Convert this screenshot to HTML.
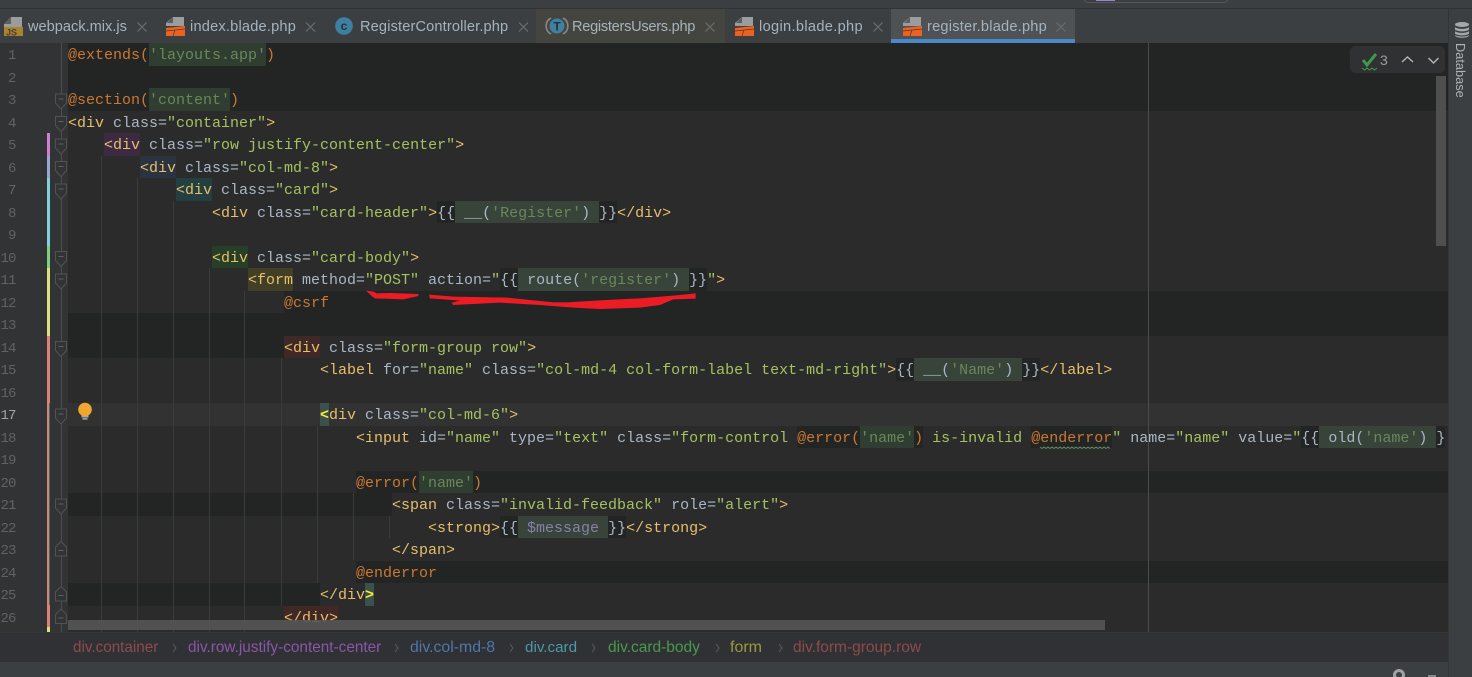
<!DOCTYPE html>
<html><head><meta charset="utf-8"><style>
html,body{margin:0;padding:0;background:#3c3f41}
#r{position:relative;width:1472px;height:677px;overflow:hidden;background:#3c3f41;font-family:"Liberation Sans",sans-serif}
.x{position:absolute}
.l{position:absolute;white-space:pre;font:15px/26.5px "Liberation Mono",monospace;color:#a9b7c6;height:22.5px}
.l span{display:inline-block;height:22.5px;vertical-align:top}
.n{position:absolute;left:0;width:15.5px;text-align:right;font:14px/26.5px "Liberation Mono",monospace;letter-spacing:-.9px;color:#606366;white-space:nowrap;height:22.5px}
.t{color:#e8bf6a}.s{color:#a5c261}.d{color:#cc7832}.q{color:#6a8759}
.p{background:#2f3e30}.g{background:#38443a}.k{background:#232525}
.g i{font-style:normal;color:#6a8759}
.m{background:#3b514d;color:#ffef28;font-weight:bold}
.tab{position:absolute;top:10px;height:34px;font-size:14.6px;line-height:34px;color:#a5b3be;white-space:nowrap}
.c{position:absolute;top:633px;line-height:30px;white-space:nowrap}
.gd{position:absolute;width:1px;background:#3a3b3b}
</style></head><body><div id="r">

<div class="x" style="left:0;top:8px;width:1472px;height:1px;background:#303234"></div>
<div class="x" style="left:1084px;top:-6px;width:144px;height:9px;border:1px solid #55585a;border-radius:4px;box-sizing:border-box"></div>
<div class="x" style="left:1096px;top:0;width:19px;height:1px;background:#9b7fd0"></div>

<div class="x" style="left:536px;top:9px;width:189px;height:34px;background:#45453f"></div>
<div class="x" style="left:891px;top:9px;width:184px;height:34px;background:#4e5254"></div>
<div class="x" style="left:891px;top:39px;width:184px;height:4px;background:#4a88c7"></div>

<div class="tab" style="left:28px">webpack.mix.js</div>
<div class="tab" style="left:190px;letter-spacing:.2px">index.blade.php</div>
<div class="tab" style="left:360px;letter-spacing:.14px">RegisterController.php</div>
<div class="tab" style="left:572px;letter-spacing:-.28px">RegistersUsers.php</div>
<div class="tab" style="left:759px;letter-spacing:.33px">login.blade.php</div>
<div class="tab" style="left:927px;letter-spacing:.22px">register.blade.php</div>

<svg class="x" style="left:0;top:0" width="1472" height="44">
<g stroke="#6c6f71" stroke-width="1.2" fill="none">
<path d="M137.500 22.500l9 9m0-9l-9 9M306 22.500l9 9m0-9l-9 9M519 22.500l9 9m0-9l-9 9M705.500 22.500l9 9m0-9l-9 9M873.500 22.500l9 9m0-9l-9 9M1056.500 22.500l9 9m0-9l-9 9"/>
</g>
<path d="M11 17h11v10H4v-3z" fill="#9a9c9e"/><path d="M11 17v7H4z" fill="#5c5f61"/>
<rect x="4" y="27" width="19" height="9" fill="#a88430"/>
<text x="6" y="35.500" font-family="Liberation Sans" font-size="9" font-weight="bold" fill="#4a4030">JS</text>
<g id="b1"><path d="M173 17h11v9h-18v-3z" fill="#9a9c9e"/><path d="M173 17v6h-6z" fill="#5c5f61"/><path d="M166 28l19-2v10h-19z" fill="#ee6220"/><path d="M166 31l19-2M175 30l-2 6" stroke="#4a3a30" stroke-width=".7" fill="none"/></g>
<use href="#b1" x="569"/><use href="#b1" x="737"/>
<circle cx="344" cy="26" r="8.800" fill="#3f7f9f"/>
<text x="344" y="30" text-anchor="middle" font-family="Liberation Sans" font-size="12" font-weight="bold" fill="#25323a">c</text>
<circle cx="557" cy="26" r="7.500" fill="#3f7f9f"/>
<path d="M551 18a9 9 0 0 0 0 16M563 18a9 9 0 0 1 0 16" stroke="#85888a" stroke-width="1.600" fill="none"/>
<text x="557" y="30.500" text-anchor="middle" font-family="Liberation Sans" font-size="12" font-weight="bold" fill="#25323a">T</text>
</svg>

<div class="x" style="left:0;top:43px;width:68px;height:589px;background:#313335"></div>
<div class="x" style="left:68px;top:43px;width:1380px;height:589px;background:#2b2b2b"></div>

<div class="x" style="left:68px;top:43px;width:1380px;height:67.500px;background:#232525"></div>
<div class="x" style="left:284px;top:290.500px;width:1164px;height:22.500px;background:#232525"></div>
<div class="x" style="left:68px;top:313px;width:1380px;height:22.500px;background:#232525"></div>
<div class="x" style="left:68px;top:335.500px;width:216px;height:22.500px;background:#232525"></div>
<div class="x" style="left:68px;top:403px;width:1380px;height:22.500px;background:#323232"></div>
<div class="x" style="left:356px;top:470.500px;width:1092px;height:22.500px;background:#232525"></div>
<div class="x" style="left:68px;top:493px;width:324px;height:22.500px;background:#232525"></div>
<div class="x" style="left:356px;top:560.500px;width:1092px;height:22.500px;background:#232525"></div>
<div class="x" style="left:68px;top:583px;width:252px;height:22.500px;background:#232525"></div>

<div class="gd" style="left:101px;top:155.500px;height:477px"></div>
<div class="gd" style="left:137px;top:178px;height:454px"></div>
<div class="gd" style="left:173px;top:200.500px;height:432px"></div>
<div class="gd" style="left:209px;top:268px;height:364px"></div>
<div class="gd" style="left:244px;top:290.500px;height:342px"></div>
<div class="gd" style="left:281px;top:358px;height:248px"></div>
<div class="gd" style="left:317px;top:425.500px;height:157px"></div>
<div class="gd" style="left:353px;top:493px;height:67px"></div>
<div class="gd" style="left:389px;top:515.500px;height:22px"></div>
<div class="x" style="left:1148px;top:43px;width:1px;height:589px;background:#4c4c4c"></div>

<div class="x" style="left:61px;top:43px;width:1px;height:589px;background:#4b4d4f"></div>
<div class="x" style="left:47px;top:133px;width:3px;height:23px;background:#cf7fd0"></div>
<div class="x" style="left:47px;top:156px;width:3px;height:22px;background:#9aa6cf"></div>
<div class="x" style="left:47px;top:178px;width:3px;height:68px;background:#7fd2dc"></div>
<div class="x" style="left:47px;top:246px;width:3px;height:22px;background:#7fcf7f"></div>
<div class="x" style="left:47px;top:268px;width:3px;height:68px;background:#dfdf80"></div>
<div class="x" style="left:47px;top:336px;width:3px;height:291px;background:#df8078"></div>
<div class="x" style="left:49px;top:403px;width:1px;height:202px;background:#3f6e6a"></div>
<div class="x" style="left:47px;top:627px;width:3px;height:5px;background:#dfdf80"></div>

<svg class="x" style="left:0;top:0" width="100" height="640">
<defs><g id="fd"><path d="M55.500 6H66.500V15L61 21L55.500 15Z" fill="#313335" stroke="#505254"/><path d="M58.500 11H63.500" stroke="#5f6265"/></g>
<g id="fu"><path d="M61 3.500L66.500 9V18H55.500V9Z" fill="#313335" stroke="#505254"/><path d="M58.500 12.500H63.500" stroke="#5f6265"/></g></defs>
<use href="#fd" y="88"/><use href="#fd" y="110.500"/><use href="#fd" y="133"/><use href="#fd" y="155.500"/><use href="#fd" y="178"/><use href="#fd" y="245.500"/><use href="#fd" y="268"/><use href="#fd" y="335.500"/><use href="#fd" y="403"/><use href="#fd" y="493"/>
<use href="#fu" y="538"/><use href="#fu" y="583"/><use href="#fu" y="605.500"/>
<circle cx="85" cy="409.500" r="6.800" fill="#f0a732"/><path d="M81.500 413h7v3h-7z" fill="#f0a732"/>
<path d="M81.500 416.700h7M82.500 418.900h5" stroke="#a9a9a9" stroke-width="1.500"/>
</svg>

<div class="n" style="top:43px">1</div><div class="n" style="top:65.500px">2</div><div class="n" style="top:88px">3</div><div class="n" style="top:110.500px">4</div><div class="n" style="top:133px">5</div><div class="n" style="top:155.500px">6</div><div class="n" style="top:178px">7</div><div class="n" style="top:200.500px">8</div><div class="n" style="top:223px">9</div><div class="n" style="top:245.500px">10</div><div class="n" style="top:268px">11</div><div class="n" style="top:290.500px">12</div><div class="n" style="top:313px">13</div><div class="n" style="top:335.500px">14</div><div class="n" style="top:358px">15</div><div class="n" style="top:380.500px">16</div><div class="n" style="top:403px;color:#a4a3a3">17</div><div class="n" style="top:425.500px">18</div><div class="n" style="top:448px">19</div><div class="n" style="top:470.500px">20</div><div class="n" style="top:493px">21</div><div class="n" style="top:515.500px">22</div><div class="n" style="top:538px">23</div><div class="n" style="top:560.500px">24</div><div class="n" style="top:583px">25</div><div class="n" style="top:605.500px">26</div>

<div class="l" style="left:68px;top:43px"><span class="d">@extends(</span><span class="q p">'layouts.app'</span><span class="d">)</span></div>
<div class="l" style="left:68px;top:88px"><span class="d">@section(</span><span class="q p">'content'</span><span class="d">)</span></div>
<div class="l" style="left:68px;top:110.500px"><span class="t">&lt;div</span> class=<span class="s">"container"</span><span class="t">&gt;</span></div>
<div class="l" style="left:104px;top:133px"><span class="t" style="background:#3c2a42">&lt;div</span> class=<span class="s">"row justify-content-center"</span><span class="t">&gt;</span></div>
<div class="l" style="left:140px;top:155.500px"><span class="t" style="background:#2c3340">&lt;div</span> class=<span class="s">"col-md-8"</span><span class="t">&gt;</span></div>
<div class="l" style="left:176px;top:178px"><span class="t" style="background:#233f3f">&lt;div</span> class=<span class="s">"card"</span><span class="t">&gt;</span></div>
<div class="l" style="left:212px;top:200.500px"><span class="t">&lt;div</span> class=<span class="s">"card-header"</span><span class="t">&gt;</span><span class="k">{{</span><span class="g"> __(<i>'Register'</i>) </span><span class="k">}}</span><span class="t">&lt;/div&gt;</span></div>
<div class="l" style="left:212px;top:245.500px"><span class="t" style="background:#263f26">&lt;div</span> class=<span class="s">"card-body"</span><span class="t">&gt;</span></div>
<div class="l" style="left:248px;top:268px"><span class="t" style="background:#414026">&lt;form</span> method=<span class="s">"POST"</span> action=<span class="s">"</span><span class="k">{{</span><span class="g"> route(<i>'register'</i>) </span><span class="k">}}</span><span class="s">"</span><span class="t">&gt;</span></div>
<div class="l d" style="left:284px;top:290.500px">@csrf</div>
<div class="l" style="left:284px;top:335.500px"><span class="t" style="background:#402826">&lt;div</span> class=<span class="s">"form-group row"</span><span class="t">&gt;</span></div>
<div class="l" style="left:320px;top:358px"><span class="t">&lt;label</span> for=<span class="s">"name"</span> class=<span class="s">"col-md-4 col-form-label text-md-right"</span><span class="t">&gt;</span><span class="k">{{</span><span class="g"> __(<i>'Name'</i>) </span><span class="k">}}</span><span class="t">&lt;/label&gt;</span></div>
<div class="l" style="left:320px;top:403px"><span class="m">&lt;</span><span class="t">div</span> class=<span class="s">"col-md-6"</span><span class="t">&gt;</span></div>
<div class="l" style="left:356px;top:425.500px;width:1092px;overflow:hidden"><span class="t">&lt;input</span> id=<span class="s">"name"</span> type=<span class="s">"text"</span> class=<span class="s">"form-control </span><span class="k d">@error(</span><span class="q p">'name'</span><span class="k d">)</span><span class="s"> is-invalid </span><span class="k d">@enderror</span><span class="s">"</span> name=<span class="s">"name"</span> value=<span class="s">"</span><span class="k">{{</span><span class="g"> old(<i>'name'</i>) </span><span class="k">}</span></div>
<div class="l" style="left:356px;top:470.500px"><span class="d">@error(</span><span class="q p">'name'</span><span class="d">)</span></div>
<div class="l" style="left:392px;top:493px"><span class="t">&lt;span</span> class=<span class="s">"invalid-feedback"</span> role=<span class="s">"alert"</span><span class="t">&gt;</span></div>
<div class="l" style="left:428px;top:515.500px"><span class="t">&lt;strong&gt;</span><span class="k">{{</span><span class="g"> <span style="color:#8a7fa8">$message</span> </span><span class="k">}}</span><span class="t">&lt;/strong&gt;</span></div>
<div class="l t" style="left:392px;top:538px">&lt;/span&gt;</div>
<div class="l d" style="left:356px;top:560.500px">@enderror</div>
<div class="l" style="left:320px;top:583px"><span class="t">&lt;/div</span><span class="m">&gt;</span></div>
<div class="l" style="left:284px;top:605.500px"><span class="t" style="background:#402826">&lt;/div&gt;</span></div>

<svg class="x" style="left:0;top:0" width="1472" height="677">
<path d="M1040 447l2 1.500 2-1.500 2 1.500 2-1.500 2 1.500 2-1.500 2 1.500 2-1.500 2 1.500 2-1.500 2 1.500 2-1.500 2 1.500 2-1.500 2 1.500 2-1.500 2 1.500 2-1.500 2 1.500 2-1.500 2 1.500 2-1.500 2 1.500 2-1.500 2 1.500 2-1.500 2 1.500 2-1.500 2 1.500 2-1.500 2 1.500 2-1.500 2 1.500 2-1.500 2 1.500" stroke="#5f8a5f" fill="none"/>
<g transform="translate(340 260) scale(.3333)" fill="#ed1c24">
<path d="M78 92L100 95L110 100L150 99L235 102V108L190 118L105 115L95 108Z"/>
<path d="M267 104L340 110L500 113L640 127L680 127L800 120L900 115L1000 107L1067 100V116L1000 118L960 135L900 143L780 147L700 143L600 135L480 128L340 135L335 128L360 122L270 115Z"/>
</g>
</svg>

<div class="x" style="left:68px;top:620px;width:1037px;height:10px;background:#555;opacity:.9"></div>
<div class="x" style="left:1436px;top:76px;width:10px;height:170px;background:#4e4f4f"></div>
<div class="x" style="left:1350px;top:46px;width:95px;height:27px;border-radius:5px;background:#2f3132"></div>
<div class="x" style="left:1380px;top:50px;font-size:14px;line-height:20px;color:#9a9da0">3</div>
<svg class="x" style="left:1350px;top:46px" width="95" height="27">
<path d="M13 14l4 5 9-11" stroke="#3f9a4a" stroke-width="3" fill="none"/>
<path d="M12 22l2.500 2 2.500-2 2.500 2 2.500-2 2.500 2 2.500-2" stroke="#3f9a4a" fill="none"/>
<path d="M52 16l5.500-5 5.500 5M78.500 12l5 5 5-5" stroke="#afb1b3" stroke-width="1.500" fill="none"/>
</svg>

<div class="x" style="left:1448px;top:9px;width:1px;height:668px;background:#323436"></div>
<svg class="x" style="left:1454px;top:21px" width="16" height="18">
<g fill="#a5a7a9"><ellipse cx="8" cy="3.500" rx="7" ry="2.500"/><path d="M1 6c2 2.500 12 2.500 14 0v2.500c-2 2.500-12 2.500-14 0zM1 10c2 2.500 12 2.500 14 0v2.500c-2 2.500-12 2.500-14 0z"/><path d="M1 14c2 2 12 2 14 0v.5c-1 3-13 3-14 0z"/></g>
</svg>
<div class="x" style="left:1452px;top:43px;writing-mode:vertical-rl;font-size:12.800px;line-height:16px;color:#afb1b3;white-space:nowrap">Database</div>

<div class="x" style="left:0;top:632px;width:1448px;height:30px;background:#2f3134;border-top:1px solid #36383a;box-sizing:border-box"></div>
<div class="c" style="left:73px;color:#8f4b4b;font-size:15.250px">div.container</div>
<div class="c" style="left:188px;color:#8b56a8;font-size:15.350px">div.row.justify-content-center</div>
<div class="c" style="left:410px;color:#4f77a8;font-size:15.850px">div.col-md-8</div>
<div class="c" style="left:525px;color:#4a9aa8;font-size:15.200px">div.card</div>
<div class="c" style="left:608px;color:#4a9a4a;font-size:15.500px">div.card-body</div>
<div class="c" style="left:730px;color:#9a9a40;font-size:16px">form</div>
<div class="c" style="left:793px;color:#8f4b4b;font-size:15.500px">div.form-group.row</div>
<svg class="x" style="left:0;top:632px" width="1472" height="45">
<path d="M173 12l3 4-3 4M395 12l3 4-3 4M510 12l3 4-3 4M592 12l3 4-3 4M716 12l3 4-3 4M779 12l3 4-3 4" stroke="#5a5c5e" fill="none"/>
<circle cx="1399" cy="43" r="4.500" fill="none" stroke="#a0a2a4" stroke-width="3"/>
<path d="M1428 44h8" stroke="#85888a" stroke-width="2"/>
</svg>

</div></body></html>
